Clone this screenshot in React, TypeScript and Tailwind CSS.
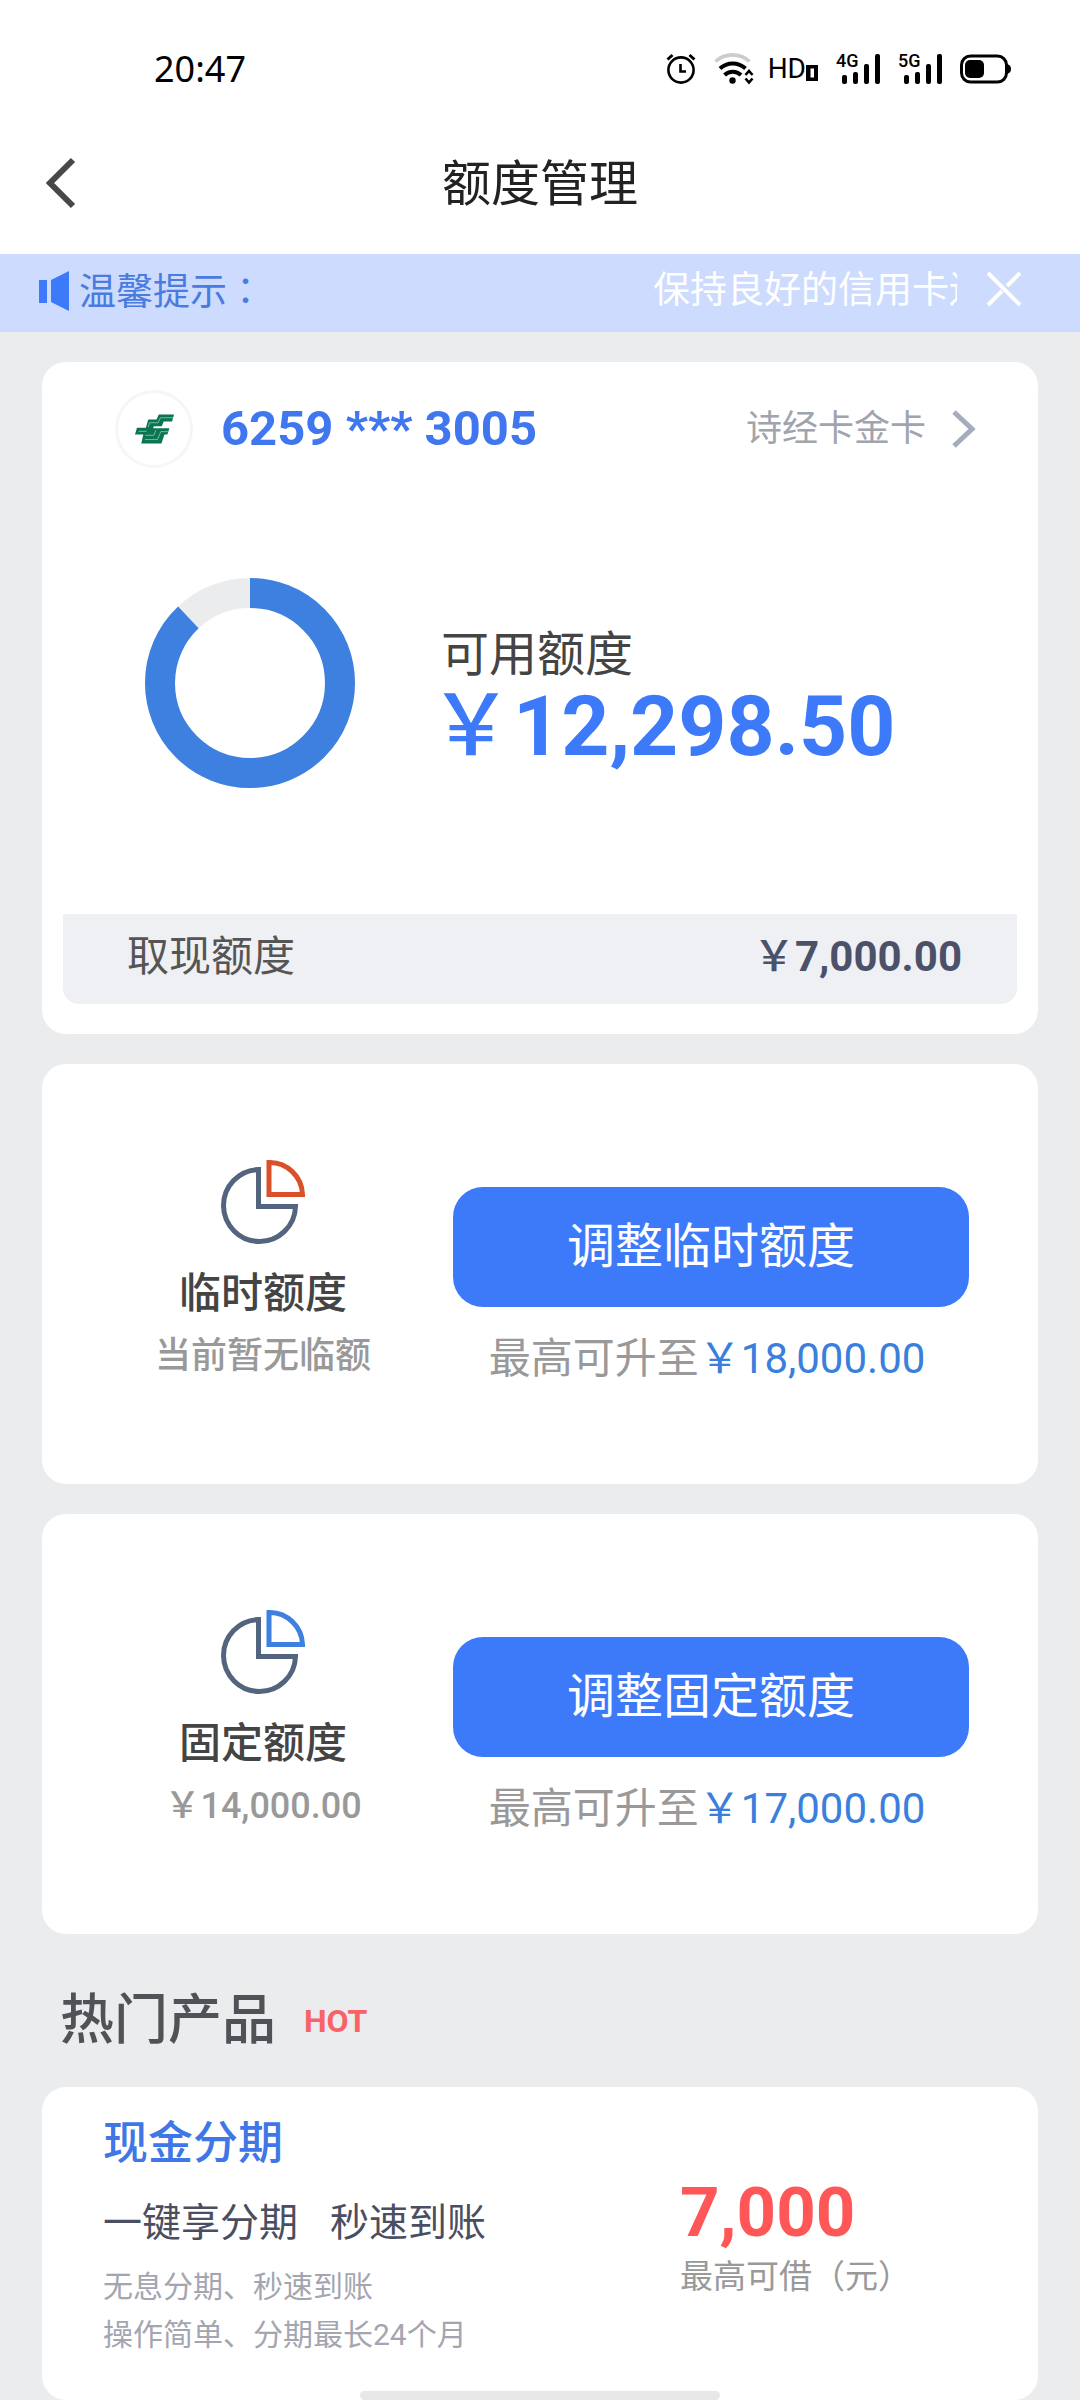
import { useState } from "react";
import type { ReactNode } from "react";

const QUOTA_TOTAL = 14000;
const QUOTA_AVAILABLE = 12298.5;

function AlarmIcon() {
  return (
    <svg width="30" height="32" viewBox="0 0 30 32" fill="none" stroke="#000" aria-hidden>
      <circle cx="15" cy="17" r="12.6" strokeWidth="2.6" />
      <path d="M14.5 11v7.5H20" strokeWidth="2.6" />
      <path d="M1.5 6.5L6.5 2M28.5 6.5L23.5 2" strokeWidth="3" />
    </svg>
  );
}

function WifiIcon() {
  return (
    <svg width="40" height="32" viewBox="0 0 40 32" fill="none" className="-mr-1" aria-hidden>
      <path d="M1.5 8.5a25 25 0 0 1 34 0" stroke="#ccc" strokeWidth="3.6" />
      <path d="M6 15.5a18.5 18.5 0 0 1 25.5 0" stroke="#000" strokeWidth="4" />
      <path d="M10.5 22a12 12 0 0 1 16.5 0" stroke="#000" strokeWidth="4" />
      <circle cx="18.5" cy="27.5" r="3.2" fill="#000" />
      <path d="M31.5 22l3.5-4 3.5 4M31.5 25.5l3.5 4 3.5-4" stroke="#000" strokeWidth="2.6" />
    </svg>
  );
}

function HdIcon() {
  return (
    <span className="flex h-8 items-center text-[28px] leading-8">
      HD
      <svg width="12" height="16" viewBox="0 0 12 16" className="mt-2" aria-hidden>
        <path d="M0 0h12v16H0zM4.500 3.500v9H8v-9z" fillRule="evenodd" />
      </svg>
    </span>
  );
}

function SignalIcon({ label }: { label: string }) {
  return (
    <span className="relative block h-8 w-11">
      <span className="absolute -top-px left-0 text-[18px] leading-[18px] font-medium">{label}</span>
      <svg width="44" height="32" viewBox="0 0 44 32" aria-hidden>
        <rect x="6" y="22" width="5" height="9" rx="2" />
        <rect x="17" y="19" width="5" height="12" rx="2" />
        <rect x="28" y="11" width="5" height="20" rx="2" />
        <rect x="39" y="1" width="5" height="30" rx="2" />
      </svg>
    </span>
  );
}

function BatteryIcon() {
  return (
    <svg width="51" height="30" viewBox="0 0 51 30" aria-hidden>
      <rect x="1.500" y="2" width="45" height="26" rx="9" fill="none" stroke="#000" strokeWidth="3" />
      <rect x="5" y="6" width="19" height="18" rx="5" />
      <path d="M47 10q4 1 4 5t-4 5z" />
    </svg>
  );
}

function SpeakerIcon() {
  return (
    <svg width="30" height="40" viewBox="0 0 30 40" fill="#3d7afa" aria-hidden>
      <path d="M0 9h8v23H0zM12 9l18-9v40l-18-9z" />
    </svg>
  );
}

function BankLogo() {
  return (
    <svg width="41" height="32" viewBox="306 218 124 96" fill="none" aria-hidden>
      <path
        d="M381 222h46l-6 21h-25l-6 15h-24l-2 6h49l-6 19h-9l-9 27h-61l6-27h-25l6-21h27l7-25h25z"
        fill="#0b7552"
      />
      <path d="M425 232h-39l-7 15h-26l-4 13M411 274h-24l-10 24h-38" stroke="#a9dcc8" strokeWidth="2" />
      <path d="M372 270l-6 15h-26M320 273h24" stroke="#a9dcc8" strokeWidth="2" />
    </svg>
  );
}

function PieIcon({ slice }: { slice: string }) {
  return (
    <svg width="84" height="84" viewBox="0 0 84 84" fill="none" strokeWidth="5" aria-hidden>
      <path d="M37.500 9.500V46.500H74.500A36 36 0 1 1 37.500 9.500z" stroke="#53647e" />
      <path d="M48 2.500V34.500H81.500A33 33 0 0 0 48 2.500z" stroke={slice} />
    </svg>
  );
}

function QuotaRing({ ratio }: { ratio: number }) {
  const length = 2 * Math.PI * 90;
  return (
    <svg width="210" height="210" viewBox="0 0 210 210" fill="none" strokeWidth="30" aria-hidden>
      <circle cx="105" cy="105" r="90" stroke="#ebecee" />
      <circle
        cx="105"
        cy="105"
        r="90"
        stroke="#3d80df"
        strokeDasharray={`${length * ratio} ${length}`}
        transform="rotate(-90 105 105)"
      />
    </svg>
  );
}

function StatusBar() {
  return (
    <div className="flex h-28 items-center justify-between bg-white pt-[26px] pr-[69px] pl-[154px] text-black">
      <span className="font-['Noto_Sans','Noto_Sans_CJK_SC',sans-serif] text-[36px] leading-none">20:47</span>
      <div className="flex items-center gap-[18px]">
        <AlarmIcon />
        <WifiIcon />
        <HdIcon />
        <SignalIcon label="4G" />
        <SignalIcon label="5G" />
        <BatteryIcon />
      </div>
    </div>
  );
}

function Notice() {
  const [closed, setClosed] = useState(false);
  if (closed) return null;

  return (
    <div className="flex h-[78px] items-center bg-[#cddbfe] pr-[57px] pb-1 pl-[39px] text-[37px] leading-[54px]">
      <SpeakerIcon />
      <span className="ml-2.5 text-[#4a7be0]">
        温馨提示<span className="font-['Noto_Sans_CJK_TC',sans-serif]">：</span>
      </span>
      <div className="ml-auto w-[304px] overflow-hidden whitespace-nowrap text-white">保持良好的信用卡还款记录</div>
      <button type="button" aria-label="关闭" onClick={() => setClosed(true)} className="mb-1 ml-7">
        <svg width="38" height="38" viewBox="0 0 38 38" stroke="#fff" strokeWidth="4" aria-hidden>
          <path d="M3 3l32 32M35 3L22 16M17 21L3 35" />
        </svg>
      </button>
    </div>
  );
}

interface YenProps {
  children: ReactNode;
  className?: string;
  signClassName?: string;
}

function Yen({ children, className, signClassName = "font-normal" }: YenProps) {
  return (
    <span className={className}>
      <span className={signClassName}>￥</span>
      {children}
    </span>
  );
}

interface AdjustCardProps {
  title: string;
  current: ReactNode;
  action: string;
  limit: string;
  slice: string;
}

function AdjustCard({ title, current, action, limit, slice }: AdjustCardProps) {
  return (
    <section className="grid grid-cols-[14fr_19fr] rounded-3xl bg-white pt-24 pr-[69px] pb-[95px] pl-[31px]">
      <div className="flex flex-col items-center">
        <PieIcon slice={slice} />
        <h2 className="mt-5 text-[42px] leading-[60px] font-medium text-[#444]">{title}</h2>
        <p className="mt-1.5 text-[36px] leading-[52px] font-medium text-[#999]">{current}</p>
      </div>
      <div className="flex flex-col pt-[27px]">
        <button type="button" className="h-[120px] rounded-[30px] bg-[#3d7afa] text-[48px] text-white">
          {action}
        </button>
        <p className="mt-[22px] pr-2 text-center text-[42px] leading-[60px] whitespace-nowrap text-[#999]">
          最高可升至
          <Yen className="text-[#3a7fdc]">{limit}</Yen>
        </p>
      </div>
    </section>
  );
}

export default function App() {
  return (
    <div className="min-h-screen bg-[#ebecee] font-['Roboto','Noto_Sans_CJK_SC',sans-serif]">
      <StatusBar />
      <header className="grid h-[142px] grid-cols-[1fr_auto_1fr] items-center bg-white px-[45px]">
        <button type="button" aria-label="返回" className="justify-self-start">
          <svg width="32" height="52" viewBox="0 0 32 52" fill="none" stroke="#484848" strokeWidth="6" aria-hidden>
            <path d="M28 3L5 26l23 23" />
          </svg>
        </button>
        <h1 className="pt-1 text-[49px] leading-[72px] text-[#222]">额度管理</h1>
      </header>
      <Notice />

      <main className="px-[42px] pt-[30px]">
        <div className="flex flex-col gap-[30px]">
          <section className="rounded-3xl bg-white px-[21px] pt-7 pb-[30px]">
            <div className="flex items-center pr-10 pl-[52px]">
              <span className="flex size-[78px] items-center justify-center rounded-full border-[3px] border-[#f6f6f6]">
                <BankLogo />
              </span>
              <span className="ml-7 text-[49px] leading-[60px] font-bold text-[#4077ee]">6259 *** 3005</span>
              <a href="#card" className="ml-auto flex items-center gap-[25px] text-[36px] leading-[52px] text-[#a0a4ae]">
                诗经卡金卡
                <svg width="26" height="38" viewBox="0 0 26 38" fill="none" stroke="#a5acbd" strokeWidth="5" aria-hidden>
                  <path d="M3 2l18 17L3 36" />
                </svg>
              </a>
            </div>

            <div className="flex items-center pt-[110px] pb-[126px] pl-[82px]">
              <QuotaRing ratio={QUOTA_AVAILABLE / QUOTA_TOTAL} />
              <div className="ml-[86px] pt-7">
                <p className="text-[48px] leading-[60px] text-[#444]">可用额度</p>
                {/* the full-width sign has wide side bearings at this size */}
                <Yen
                  className="-ml-3 block text-[84px] leading-[84px] font-bold text-[#3d7afa]"
                  signClassName="font-medium"
                >
                  12,298.50
                </Yen>
              </div>
            </div>

            <div className="flex h-[90px] items-center justify-between rounded-b-2xl bg-[#eff0f4] pr-[55px] pb-1.5 pl-16 text-[42px]">
              <span className="text-[#555]">取现额度</span>
              <Yen className="font-bold text-[#4a5169]" signClassName="font-medium">
                7,000.00
              </Yen>
            </div>
          </section>

          <AdjustCard
            title="临时额度"
            current="当前暂无临额"
            action="调整临时额度"
            limit="18,000.00"
            slice="#d9502a"
          />
          <AdjustCard
            title="固定额度"
            current={<Yen signClassName="font-medium">14,000.00</Yen>}
            action="调整固定额度"
            limit="17,000.00"
            slice="#3d80df"
          />
        </div>

        <div className="flex h-[153px] items-center gap-7 pt-5 pl-[18px]">
          <h2 className="text-[54px] leading-[78px] font-medium text-[#505257]">热门产品</h2>
          <span className="text-[32px] leading-none font-bold text-[#f86368]">HOT</span>
        </div>

        <section className="flex justify-between rounded-3xl bg-white pt-6 pr-[127px] pb-[41px] pl-[61px]">
          <div>
            <h3 className="text-[45px] leading-[66px] font-medium text-[#4077e6]">现金分期</h3>
            <p className="mt-4 flex gap-8 text-[39px] leading-[60px] text-[#4a4e60]">
              <span>一键享分期</span>
              <span>秒速到账</span>
            </p>
            <p className="mt-2.5 text-[30px] leading-[48px] text-[#a3a6b0]">
              无息分期、秒速到账
              <br />
              操作简单、分期最长24个月
            </p>
          </div>
          <div className="pt-[72px]">
            <p className="text-[69px] leading-[60px] font-bold text-[#ff5757]">7,000</p>
            <p className="mt-2.5 text-[33px] leading-[48px] text-[#999]">最高可借（元）</p>
          </div>
        </section>
      </main>

      {/* home indicator */}
      <div className="fixed bottom-0 left-1/3 h-[9px] w-1/3 rounded-full bg-[#e8e8e8]" />
    </div>
  );
}
